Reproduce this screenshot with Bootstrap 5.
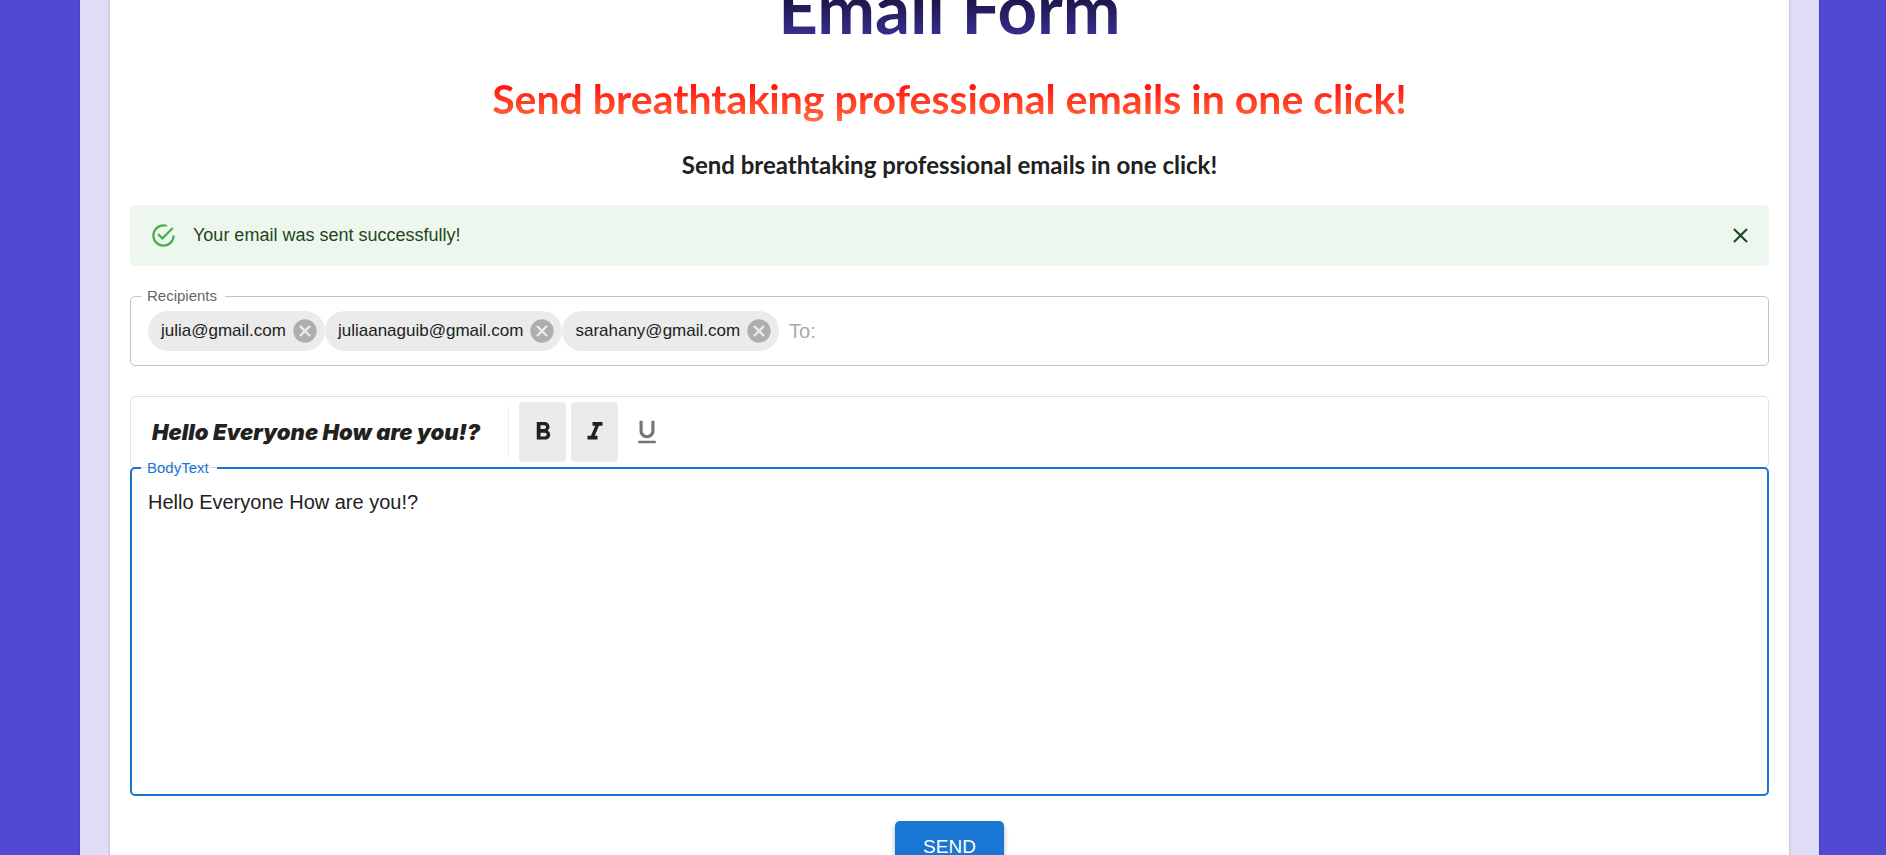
<!DOCTYPE html>
<html lang="en">
<head>
<meta charset="utf-8">
<meta name="viewport" content="width=device-width, initial-scale=1">
<title>Email Form</title>
<link href="https://cdn.jsdelivr.net/npm/bootstrap@5.3.0/dist/css/bootstrap.min.css" rel="stylesheet">
<style>
body { background: #5049d2; color: #212121; font-family: "Liberation Sans", Arial, sans-serif; font-size: 20px; overflow-x: hidden; }
.page-wrap { padding: 0 67px 0 80px; }
.frame { background: #dfdcf5; padding: 0 30px; box-shadow: 0 1px 3px rgba(0,0,0,.2); }
.sheet { background: #fff; padding: 0 20px 40px; min-height: 100vh; box-shadow: 0 1px 3px rgba(0,0,0,.2); }
.titles { font-family: Lato, sans-serif; font-weight: 700; }
.titles h1, .titles h2, .titles p { margin: 0; font-weight: 700; }
.titles h1 { font-size: 69px; line-height: 80px; margin-top: -32px; }
.titles h2 { font-size: 41px; line-height: 50px; margin-top: 26px; }
.titles p { font-size: 24px; line-height: 30px; margin: 26px 0 25px; }
.grad { background-clip: text; -webkit-background-clip: text; color: transparent; }
.grad-navy { background-image: linear-gradient(#05030f, #4036a6); }
.grad-fire { background-image: linear-gradient(#ff0a0a 15%, #ff7640); }
.note { background: #edf7ed; color: #1e4620; border-radius: 5px; height: 61px; padding: 0 16px 0 20px; font-size: 18px; margin-bottom: 20px; }
.plain { background: none; border: 0; padding: 0; line-height: 0; color: inherit; }
.field { border: 1px solid #c4c4c4; border-radius: 5px; padding: 0 17px; }
.field legend { float: none; width: auto; margin: 0 0 0 -7px; padding: 0 8px 0 6px; font-size: 15px; line-height: 20px; color: #666; }
.recips { padding: 5px 0 14px; }
.chip { background: #ebebeb; border-radius: 20px; height: 40px; padding: 0 6px 0 13px; font-size: 17px; gap: 5px; }
.chip button { color: #aeaeae; }
.bare { border: 0; outline: 0; background: none; padding: 0; color: #212121; }
.bare::placeholder { color: #aaa; }
#to { margin-left: 10px; }
.tools { border: 1px solid #e0e0e0; border-radius: 5px; height: 72px; padding: 0 5px 0 21px; margin-top: 30px; }
.preview { font-family: Inter, sans-serif; font-weight: 900; font-style: italic; font-size: 22px; margin-right: 28px; }
.rule { width: 1px; height: 50px; background: #ececec; margin-right: 10px; }
.tool { border: 0; width: 47px; height: 60px; border-radius: 4px; background: none; color: #757575; padding: 0 0 2px; margin-right: 5px; }
.tool.on { background: #ebebeb; color: #212121; }
.field.body-field { border: 2px solid #1976d2; margin-top: -10px; padding: 0 16px; }
.body-field legend { color: #1976d2; }
.body-field textarea { display: block; height: 316px; padding-top: 9px; line-height: 30px; resize: none; }
.send { background: #1976d2; color: #fff; border: 0; border-radius: 5px; font-size: 19px; line-height: 28px; padding: 12px 28px; margin-top: 25px; box-shadow: 0 3px 5px rgba(0,0,0,.3); }
</style>
</head>
<body>
<div class="page-wrap">
<div class="frame">
<main class="sheet">
  <header class="titles text-center">
    <h1 class="grad grad-navy">Email Form</h1>
    <h2 class="grad grad-fire">Send breathtaking professional emails in one click!</h2>
    <p>Send breathtaking professional emails in one click!</p>
  </header>
  <div class="note d-flex align-items-center" role="status">
    <svg width="27" height="27" viewBox="0 0 24 24" fill="#4caf50" aria-hidden="true"><path d="M20 12a8 8 0 1 1-8-8c.76 0 1.5.11 2.2.31l1.57-1.57A9.8 9.8 0 0 0 12 2a10 10 0 1 0 10 10h-2M7.91 10.08 6.5 11.5 11 16 21 6l-1.41-1.42L11 13.17l-3.09-3.09z"/></svg>
    <span class="ms-3">Your email was sent successfully!</span>
    <button class="plain ms-auto" type="button" aria-label="Close"><svg width="25" height="25" viewBox="0 0 24 24" fill="currentColor"><path d="M19 6.41 17.59 5 12 10.59 6.41 5 5 6.41 10.59 12 5 17.59 6.41 19 12 13.41 17.59 19 19 17.59 13.41 12z"/></svg></button>
  </div>
  <form>
    <fieldset class="field">
      <legend><label for="to">Recipients</label></legend>
      <div class="recips d-flex align-items-center">
        <span class="chip d-flex align-items-center">julia@gmail.com <button class="plain" type="button" aria-label="Remove julia@gmail.com"><svg width="28" height="28" viewBox="0 0 24 24" fill="currentColor"><path d="M12 2C6.47 2 2 6.47 2 12s4.47 10 10 10 10-4.47 10-10S17.53 2 12 2zm5 13.59L15.59 17 12 13.41 8.41 17 7 15.59 10.59 12 7 8.41 8.41 7 12 10.59 15.59 7 17 8.41 13.41 12 17 15.59z"/></svg></button></span>
        <span class="chip d-flex align-items-center">juliaanaguib@gmail.com <button class="plain" type="button" aria-label="Remove juliaanaguib@gmail.com"><svg width="28" height="28" viewBox="0 0 24 24" fill="currentColor"><path d="M12 2C6.47 2 2 6.47 2 12s4.47 10 10 10 10-4.47 10-10S17.53 2 12 2zm5 13.59L15.59 17 12 13.41 8.41 17 7 15.59 10.59 12 7 8.41 8.41 7 12 10.59 15.59 7 17 8.41 13.41 12 17 15.59z"/></svg></button></span>
        <span class="chip d-flex align-items-center">sarahany@gmail.com <button class="plain" type="button" aria-label="Remove sarahany@gmail.com"><svg width="28" height="28" viewBox="0 0 24 24" fill="currentColor"><path d="M12 2C6.47 2 2 6.47 2 12s4.47 10 10 10 10-4.47 10-10S17.53 2 12 2zm5 13.59L15.59 17 12 13.41 8.41 17 7 15.59 10.59 12 7 8.41 8.41 7 12 10.59 15.59 7 17 8.41 13.41 12 17 15.59z"/></svg></button></span>
        <input id="to" class="bare flex-grow-1" type="text" placeholder="To:">
      </div>
    </fieldset>
    <div class="tools d-flex align-items-center">
      <span class="preview">Hello Everyone How are you!?</span>
      <span class="rule"></span>
      <button class="tool on" type="button" aria-label="Bold"><svg width="30" height="30" viewBox="0 0 24 24" fill="currentColor"><path d="M15.6 10.79c.97-.67 1.65-1.77 1.65-2.79 0-2.26-1.75-4-4-4H7v14h7.04c2.09 0 3.71-1.7 3.71-3.79 0-1.52-.86-2.82-2.15-3.42zM10 6.5h3c.83 0 1.5.67 1.5 1.5s-.67 1.5-1.5 1.5h-3v-3zm3.5 9H10v-3h3.5c.83 0 1.5.67 1.5 1.5s-.67 1.5-1.5 1.5z"/></svg></button>
      <button class="tool on" type="button" aria-label="Italic"><svg width="30" height="30" viewBox="0 0 24 24" fill="currentColor"><path d="M10 4v3h2.21l-3.42 8H6v3h8v-3h-2.21l3.42-8H18V4z"/></svg></button>
      <button class="tool" type="button" aria-label="Underline"><svg width="30" height="30" viewBox="0 0 24 24" fill="currentColor"><path d="M12 17c3.31 0 6-2.69 6-6V3h-2.5v8c0 1.93-1.57 3.5-3.5 3.5S8.5 12.93 8.5 11V3H6v8c0 3.31 2.69 6 6 6zm-7 2v2h14v-2H5z"/></svg></button>
    </div>
    <fieldset class="field body-field">
      <legend><label for="body">BodyText</label></legend>
      <textarea id="body" class="bare w-100">Hello Everyone How are you!?</textarea>
    </fieldset>
    <div class="text-center"><button class="send" type="submit">SEND</button></div>
  </form>
</main>
</div>
</div>
<script src="https://cdn.jsdelivr.net/npm/bootstrap@5.3.0/dist/js/bootstrap.bundle.min.js"></script>
</body>
</html>
